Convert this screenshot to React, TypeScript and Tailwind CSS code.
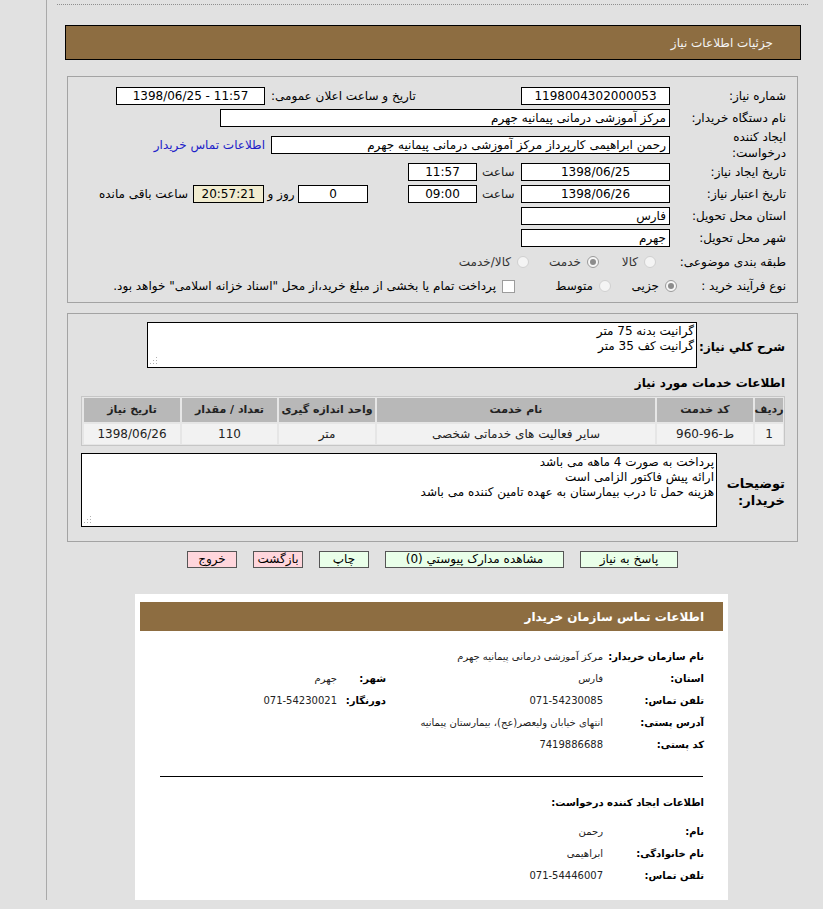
import React from "react";

type BoxProps = {
  className: string;
  children?: React.ReactNode;
};

// input-looking box
const Box: React.FC<BoxProps> = ({ className, children }) => (
  <div
    className={
      "h-[18px] shrink-0 overflow-hidden whitespace-nowrap border border-black px-[3px] leading-[16px] " +
      className
    }
  >
    {children}
  </div>
);

const Radio: React.FC<{ checked?: boolean }> = ({ checked }) => (
  <span
    className={
      "inline-flex h-[12px] w-[12px] shrink-0 items-center justify-center rounded-full border " +
      (checked ? "border-[#9a9a9a] bg-[#f6f6f6]" : "border-[#d0d0d0] bg-[#f4f4f4]")
    }
  >
    {checked && <span className="h-[6px] w-[6px] rounded-full bg-[#8c8c8c]" />}
  </span>
);

const Grip = () => (
  <svg className="absolute bottom-[2px] left-[2px]" width="8" height="8" viewBox="0 0 8 8">
    <rect x="6" y="0" width="1" height="1" fill="#b0b0b0" />
    <rect x="3" y="3" width="1" height="1" fill="#b0b0b0" />
    <rect x="6" y="3" width="1" height="1" fill="#b0b0b0" />
    <rect x="0" y="6" width="1" height="1" fill="#b0b0b0" />
    <rect x="3" y="6" width="1" height="1" fill="#b0b0b0" />
    <rect x="6" y="6" width="1" height="1" fill="#b0b0b0" />
  </svg>
);

const Label: React.FC<{ className: string; children: React.ReactNode }> = ({ className, children }) => (
  <div className={"shrink-0 whitespace-nowrap " + className}>{children}</div>
);

const headers = ["ردیف", "کد خدمت", "نام خدمت", "واحد اندازه گیری", "تعداد / مقدار", "تاریخ نیاز"];
const row: React.ReactNode[] = [
  "1",
  <span dir="ltr" className="flex">
    <span>960-96-</span>
    <span>ط</span>
  </span>,
  "سایر فعالیت های خدماتی شخصی",
  "متر",
  "110",
  "1398/06/26",
];

const buyerRows = [
  { label: "نام سازمان خریدار:", value: "مرکز آموزشی درمانی پیمانیه جهرم" },
  { label: "استان:", value: "فارس", label2: "شهر:", value2: "جهرم" },
  { label: "تلفن تماس:", value: "071-54230085", label2: "دورنگار:", value2: "071-54230021" },
  { label: "آدرس پستی:", value: "انتهای خیابان ولیعصر(عج)، بیمارستان پیمانیه" },
  { label: "کد پستی:", value: "7419886688" },
];

const creatorRows = [
  { label: "نام:", value: "رحمن" },
  { label: "نام خانوادگی:", value: "ابراهیمی" },
  { label: "تلفن تماس:", value: "071-54446007" },
];

export default function App() {
  return (
    <div className="h-[909px] w-[823px] overflow-hidden bg-[#e1e1e1] font-['DejaVu_Sans',sans-serif] text-[12px] text-black">
      <div dir="rtl" className="ml-[46px] flex h-[900px] flex-col border-l border-[#a9a9a9]">
        <div className="mr-[15px] mt-[4px] w-[751px] border-t border-dotted border-[#8f8f8f]" />

        {/* title bar */}
        <div className="mr-[22px] mt-[20px] flex h-[35px] w-[736px] items-center border border-black bg-[#8d6d41] pr-[27px] text-[#f4f4f4]">
          جزئیات اطلاعات نیاز
        </div>

        {/* main info panel */}
        <div className="mr-[25px] mt-[16px] h-[227px] w-[731px] border border-[#a3a3a3] pr-[11px] pt-[8px]">
          <div className="flex h-[22px] items-center">
            <Label className="w-[116px]">شماره نیاز:</Label>
            <Box className="w-[149px] bg-white text-center">1198004302000053</Box>
            <Label className="w-[256px] pl-[6px] text-left">تاریخ و ساعت اعلان عمومی:</Label>
            <Box className="w-[149px] bg-white text-center">
              <span dir="ltr">1398/06/25 - 11:57</span>
            </Box>
          </div>
          <div className="flex h-[22px] items-center">
            <Label className="w-[116px]">نام دستگاه خریدار:</Label>
            <Box className="w-[450px] bg-white text-right">مرکز آموزشی درمانی پیمانیه جهرم</Box>
          </div>
          <div className="flex h-[32px] items-center">
            <Label className="w-[116px] leading-[16px]">
              ایجاد کننده
              <br />
              درخواست:
            </Label>
            <Box className="w-[399px] bg-white text-right">رحمن ابراهیمی کارپرداز مرکز آموزشی درمانی پیمانیه جهرم</Box>
            <a className="mr-[6px] shrink-0 text-[#2020c8]">اطلاعات تماس خریدار</a>
          </div>
          <div className="flex h-[22px] items-center">
            <Label className="w-[116px]">تاریخ ایجاد نیاز:</Label>
            <Box className="w-[149px] bg-white text-center">1398/06/25</Box>
            <Label className="w-[44px] pl-[5px] text-left text-[#222]">ساعت</Label>
            <Box className="w-[69px] bg-white text-center">11:57</Box>
          </div>
          <div className="flex h-[22px] items-center">
            <Label className="w-[116px]">تاریخ اعتبار نیاز:</Label>
            <Box className="w-[149px] bg-white text-center">1398/06/26</Box>
            <Label className="w-[44px] pl-[5px] text-left text-[#222]">ساعت</Label>
            <Box className="w-[69px] bg-white text-center">09:00</Box>
            <Box className="mr-[40px] w-[70px] bg-white text-center">0</Box>
            <Label className="w-[34px] text-center">روز و</Label>
            <Box className="w-[71px] bg-[#f1ecd0] text-center">20:57:21</Box>
            <Label className="mr-[5px]">ساعت باقی مانده</Label>
          </div>
          <div className="flex h-[22px] items-center">
            <Label className="w-[116px]">استان محل تحویل:</Label>
            <Box className="w-[149px] bg-white text-right">فارس</Box>
          </div>
          <div className="flex h-[22px] items-center">
            <Label className="w-[116px]">شهر محل تحویل:</Label>
            <Box className="w-[149px] bg-white text-right">جهرم</Box>
          </div>
          <div className="flex h-[26px] items-center">
            <Label className="w-[130px]">طبقه بندی موضوعی:</Label>
            <div className="flex w-[57px] items-center gap-[6px] text-[#333]">
              <Radio />
              <span>کالا</span>
            </div>
            <div className="flex w-[70px] items-center gap-[6px] text-[#333]">
              <Radio checked />
              <span>خدمت</span>
            </div>
            <div className="flex items-center gap-[6px] text-[#333]">
              <Radio />
              <span>کالا/خدمت</span>
            </div>
          </div>
          <div className="flex h-[22px] items-center">
            <Label className="w-[109px]">نوع فرآیند خرید :</Label>
            <div className="flex w-[66px] items-center gap-[6px]">
              <Radio checked />
              <span>جزیی</span>
            </div>
            <div className="flex w-[96px] items-center gap-[6px]">
              <Radio />
              <span>متوسط</span>
            </div>
            <span className="h-[13px] w-[13px] shrink-0 border border-[#9c9c9c] bg-white" />
            <span className="mr-[6px] whitespace-nowrap">
              پرداخت تمام یا بخشی از مبلغ خرید،از محل "اسناد خزانه اسلامی" خواهد بود.
            </span>
          </div>
        </div>

        {/* description panel */}
        <div className="mr-[25px] mt-[10px] h-[229px] w-[731px] border border-[#a3a3a3] pr-[12px] pt-[8px]">
          <div className="flex items-center">
            <Label className="w-[88px] pt-[4px] text-[12px] font-bold">شرح کلي نياز:</Label>
            <div className="relative h-[46px] w-[550px] border border-black bg-white px-[2px] pt-[1px] leading-[15px]">
              گرانیت بدنه 75 متر
              <br />
              گرانیت کف 35 متر
              <Grip />
            </div>
          </div>
          <div className="mt-[7px] text-[12px] font-bold leading-[16px]">اطلاعات خدمات مورد نیاز</div>
          <div className="mt-[5px] grid w-[704px] grid-cols-[28px_96px_278px_96px_95px_96px] gap-[2px] border border-[#c6c6c6] bg-[#e6e6e6] p-[1px]">
            {headers.map((h, i) => (
              <div
                key={i}
                className="flex h-[24px] items-center justify-center bg-[#b8b8b8] text-[11px] font-bold text-[#222]"
              >
                {h}
              </div>
            ))}
            {row.map((c, i) => (
              <div key={i} className="flex h-[20px] items-center justify-center bg-[#f2f2f2] text-[#222]">
                {c}
              </div>
            ))}
          </div>
          <div className="mt-[7px] flex items-center">
            <Label className="w-[68px] pt-[4px] text-[13px] font-bold leading-[17px]">
              توضیحات
              <br />
              خریدار:
            </Label>
            <div className="relative h-[74px] w-[636px] border border-black bg-white px-[2px] pt-[1px] leading-[15px]">
              پرداخت به صورت 4 ماهه می باشد
              <br />
              ارائه پیش فاکتور الزامی است
              <br />
              هزینه حمل تا درب بیمارستان به عهده تامین کننده می باشد
              <Grip />
            </div>
          </div>
        </div>

        {/* buttons */}
        <div className="mr-[145px] mt-[9px] flex h-[17px] gap-[16px]">
          <button className="h-[17px] w-[98px] border border-[#555] bg-[#e9ffe9] text-[12px] leading-[15px]">پاسخ به نیاز</button>
          <button className="h-[17px] w-[179px] border border-[#555] bg-[#e9ffe9] text-[12px] leading-[15px]">مشاهده مدارک پیوستي (0)</button>
          <button className="h-[17px] w-[50px] border border-[#555] bg-[#e9ffe9] text-[12px] leading-[15px]">چاپ</button>
          <button className="h-[17px] w-[50px] border border-[#555] bg-[#ffd6dc] text-[12px] leading-[15px]">بازگشت</button>
          <button className="h-[17px] w-[50px] border border-[#555] bg-[#ffd6dc] text-[12px] leading-[15px]">خروج</button>
        </div>

        {/* buyer contact card */}
        <div className="mr-[95px] mt-[26px] w-[593px] flex-1 bg-white px-[5px] pt-[8px]">
          <div className="flex h-[29px] items-center bg-[#8d6d41] pr-[19px] text-[12px] font-bold text-white">
            اطلاعات تماس سازمان خریدار
          </div>
          <div className="mt-[14px] pr-[19px]">
            {buyerRows.map((r, i) => (
              <div key={i} className="flex h-[22px] items-center">
                <div className="w-[101px] shrink-0 whitespace-nowrap text-[10px] font-bold">{r.label}</div>
                <div className="w-[217px] shrink-0 text-[10px] text-[#222]">{r.value}</div>
                {r.label2 && <div className="w-[49px] shrink-0 text-[10px] font-bold">{r.label2}</div>}
                {r.value2 && <div className="text-[10px] text-[#222]">{r.value2}</div>}
              </div>
            ))}
          </div>
          <div className="mr-[20px] mt-[21px] w-[543px] border-t border-black" />
          <div className="mt-[14px] flex h-[22px] items-center pr-[19px] text-[10px] font-bold">
            اطلاعات ایجاد کننده درخواست:
          </div>
          <div className="mt-[7px] pr-[19px]">
            {creatorRows.map((r, i) => (
              <div key={i} className="flex h-[22px] items-center">
                <div className="w-[101px] shrink-0 whitespace-nowrap text-[10px] font-bold">{r.label}</div>
                <div className="text-[10px] text-[#222]">{r.value}</div>
              </div>
            ))}
          </div>
        </div>
      </div>
    </div>
  );
}
